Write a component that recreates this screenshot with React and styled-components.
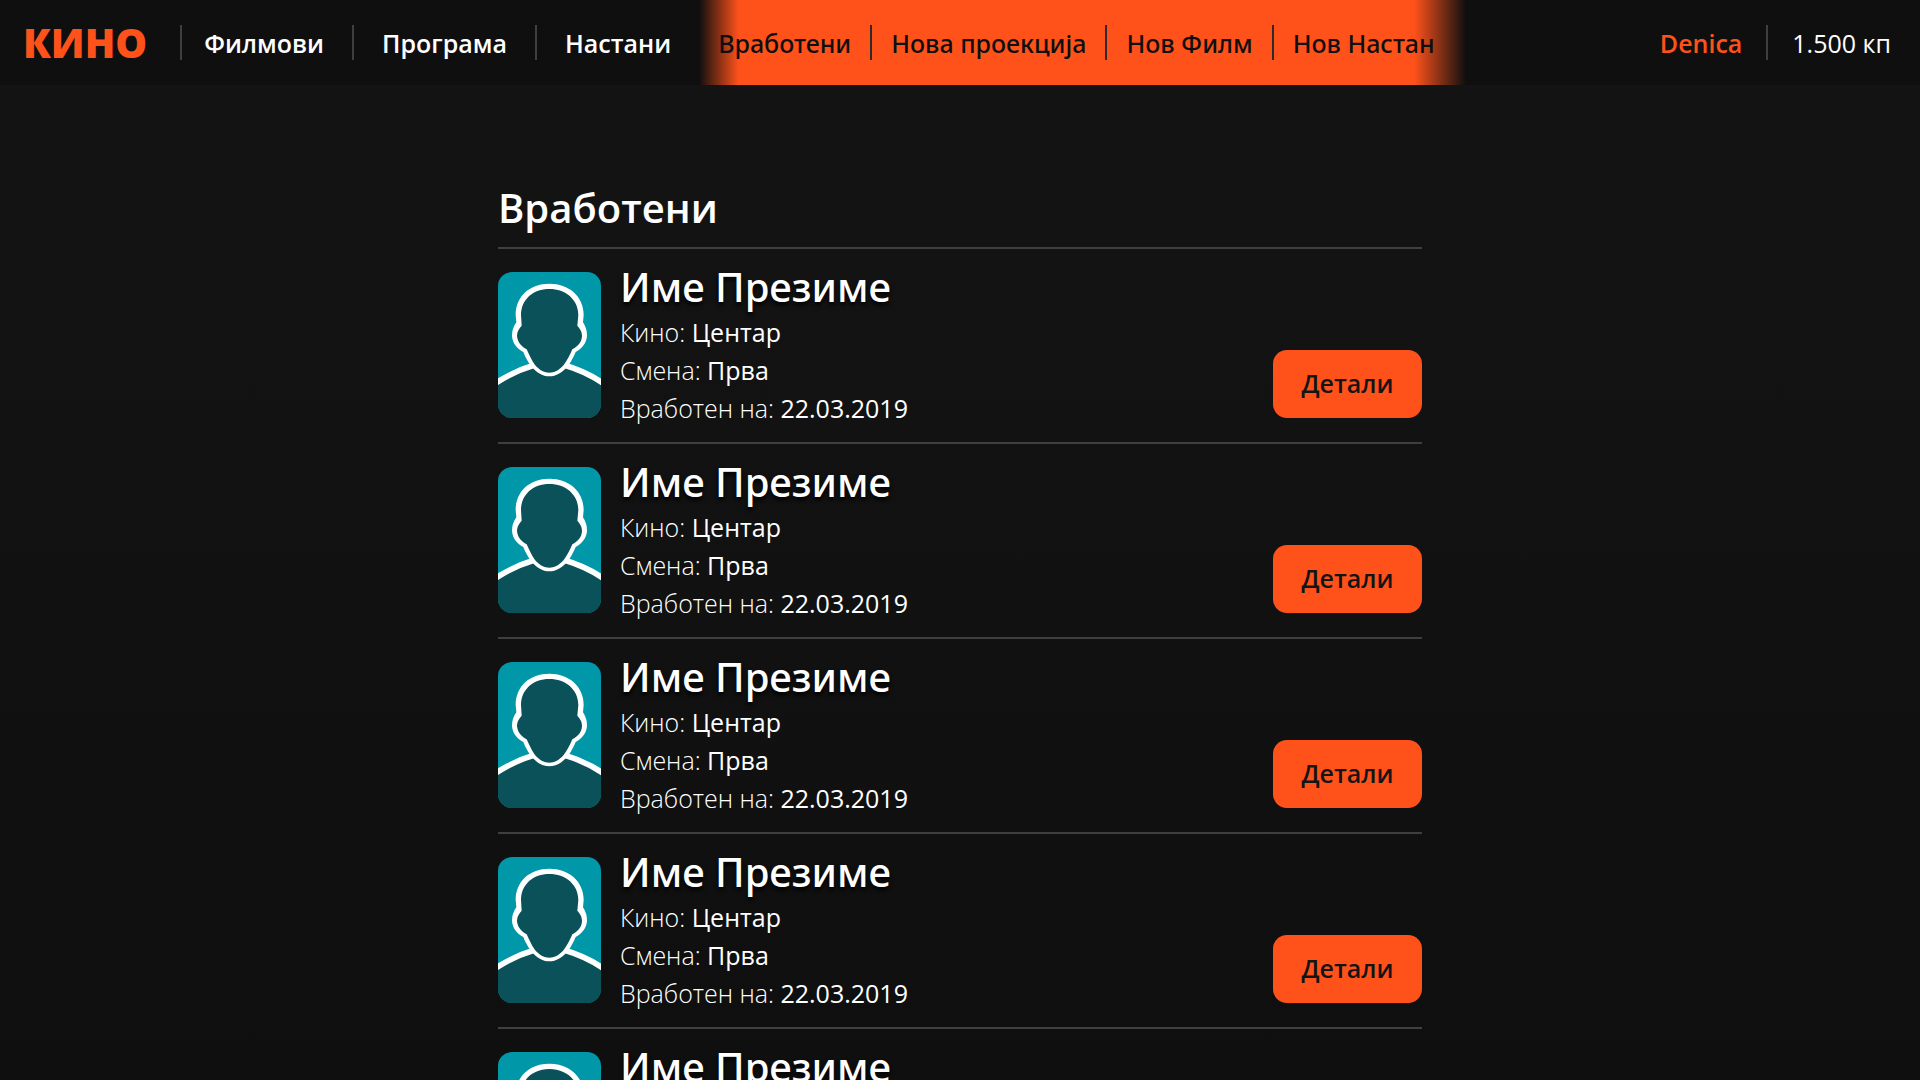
import React from "react";
import styled, { createGlobalStyle } from "styled-components";

const orange = "#ff521b";
const dark = "#0f0f0f";

const GlobalStyle = createGlobalStyle`
  * {
    box-sizing: border-box;
  }

  body {
    margin: 0;
    background: linear-gradient(#141414, #0f0f0f) no-repeat #0f0f0f;
    background-size: 100% 100vh;
    color: white;
    font-family: "Open Sans", "Noto Sans", sans-serif;
    font-size: 25px;
  }
`;

const Page = styled.div`
  height: 100vh;
  overflow-y: auto;
  scrollbar-width: none;
`;

const Header = styled.header`
  display: flex;
  align-items: center;
  height: 85px;
  padding: 0 29px 0 23px;
  background: ${dark};
  line-height: 34px;
  white-space: nowrap;
`;

const Logo = styled.a`
  padding-right: 33px;
  color: ${orange};
  font-size: 40px;
  font-weight: 800;
  text-decoration: none;
`;

const Nav = styled.nav`
  display: flex;
  align-items: center;
`;

const NavLink = styled.a`
  padding: 0 28px;
  color: white;
  font-weight: 600;
  text-decoration: none;

  &:first-child {
    padding-left: 22px;
  }
`;

const Divider = styled.span`
  width: 2px;
  height: 35px;
  background: ${props => props.color || "#3f3f3f"};
`;

const AdminNav = styled(Nav)`
  align-self: stretch;
  padding: 0 12px 0 0;
  background: linear-gradient(to right, ${dark}, ${orange} 40px, ${orange} calc(100% - 52px), ${dark});
`;

const AdminLink = styled.a`
  padding: 0 19px;
  color: ${dark};
  font-family: "Noto Sans", "Open Sans", sans-serif;
  font-weight: 500;
  text-decoration: none;
`;

const Account = styled.div`
  display: flex;
  align-items: center;
  gap: 24px;
  margin-left: auto;
`;

const User = styled.a`
  color: ${orange};
  font-weight: 600;
  text-decoration: none;
`;

const Main = styled.main`
  width: 924px;
  max-width: 100%;
  margin: 0 auto;
  padding-top: 96px;
`;

const Title = styled.h1`
  margin: 0;
  padding-bottom: 12px;
  border-bottom: 2px solid #3f3f3f;
  font-size: 40px;
  font-weight: 600;
  line-height: 54px;
`;

const List = styled.ul`
  margin: 0;
  padding: 0;
  list-style: none;
`;

const Employee = styled.li`
  display: flex;
  align-items: flex-end;
  padding: 23px 0 24px;
  border-bottom: 2px solid #3f3f3f;
`;

const Photo = styled.svg`
  flex: none;
  width: 103px;
  height: 146px;
  border-radius: 14px;
  background: #0098a9;
`;

const Info = styled.div`
  height: 146px;
  margin-left: 19px;
`;

const Name = styled.h2`
  margin: 0;
  padding-bottom: 11px;
  font-family: "Noto Sans", "Open Sans", sans-serif;
  font-size: 40px;
  font-weight: 500;
  line-height: 30px;
  text-shadow: 0 3px 4px black;
`;

const Field = styled.p`
  margin: 0;
  font-weight: 300;
  line-height: 38px;
`;

const Value = styled.span`
  font-weight: 400;
`;

const Button = styled.button`
  width: 149px;
  height: 68px;
  margin-left: auto;
  padding: 0 0 2px;
  border: none;
  border-radius: 14px;
  background: ${orange};
  color: #141414;
  font: inherit;
  font-weight: 600;
  cursor: pointer;
`;

const links = ["Филмови", "Програма", "Настани"];
const adminLinks = ["Вработени", "Нова проекција", "Нов Филм", "Нов Настан"];

const employees = Array.from({ length: 5 }, (_, id) => ({
  id,
  name: "Име Презиме",
  cinema: "Центар",
  shift: "Прва",
  hired: "22.03.2019",
}));

const Avatar = () => (
  <Photo viewBox="24 36 309 438" preserveAspectRatio="none" aria-hidden="true">
    <path
      d="M0 382C45 348 90 328 134 315H222C266 328 312 348 357 382V500H0Z"
      fill="#0a5159"
      stroke="white"
      strokeWidth="17"
    />
    <path
      d="M178 71C120 71 77 108 77 165L79 187Q66 205 66 227C67 250 82 266 100 276C106 292 112 302 121 315C138 338 158 349 178 349C198 349 218 338 236 315C245 302 250 292 257 276C274 266 290 250 291 227Q291 205 279 187L281 165C281 108 236 71 178 71Z"
      fill="white"
    />
    <path
      d="M178 87C130 87 93 118 93 165L95 197Q81 212 81 227C82 246 95 260 110 268C119 288 125 301 135 315C150 332 164 338 178 338C192 338 206 332 221 315C231 301 239 288 247 268C262 260 276 246 276 227Q276 212 262 197L265 165C265 118 226 87 178 87Z"
      fill="#0a5159"
    />
  </Photo>
);

const App = () => {
  return (
    <Page>
      <GlobalStyle />
      <Header>
        <Logo href="#">КИНО</Logo>
        <Divider />
        <Nav>
          {links.map((link, index) => (
            <React.Fragment key={link}>
              {index > 0 && <Divider />}
              <NavLink href="#">{link}</NavLink>
            </React.Fragment>
          ))}
        </Nav>
        <AdminNav>
          {adminLinks.map((link, index) => (
            <React.Fragment key={link}>
              {index > 0 && <Divider color="#2b2b2b" />}
              <AdminLink href="#">{link}</AdminLink>
            </React.Fragment>
          ))}
        </AdminNav>
        <Account>
          <User href="#">Denica</User>
          <Divider />
          <span>1.500 кп</span>
        </Account>
      </Header>
      <Main>
        <Title>Вработени</Title>
        <List>
          {employees.map(employee => (
            <Employee key={employee.id}>
              <Avatar />
              <Info>
                <Name>{employee.name}</Name>
                <Field>Кино: <Value>{employee.cinema}</Value></Field>
                <Field>Смена: <Value>{employee.shift}</Value></Field>
                <Field>Вработен на: <Value>{employee.hired}</Value></Field>
              </Info>
              <Button>Детали</Button>
            </Employee>
          ))}
        </List>
      </Main>
    </Page>
  );
};

export default App;
